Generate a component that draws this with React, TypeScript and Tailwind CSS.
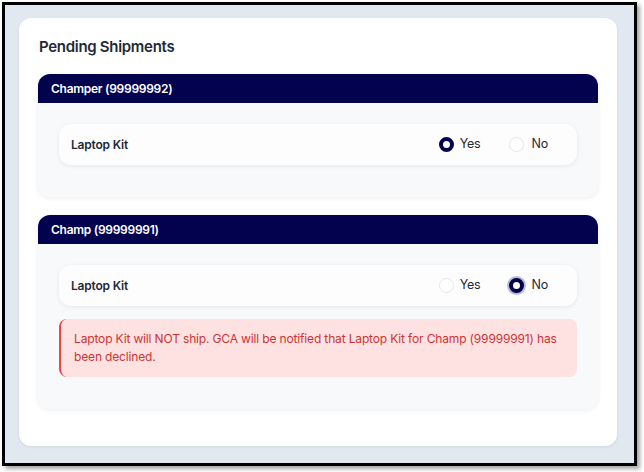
import React from 'react'

type Choice = 'yes' | 'no'

function Radio({ checked, focused }: { checked: boolean; focused?: boolean }) {
    if (checked) {
        return (
            <span
                className={`block w-[15px] h-[15px] rounded-full border-[4px] border-[#02024f] bg-white ${focused ? 'ring-[2px] ring-[#b9b9d6]' : ''}`}
            />
        )
    }
    return <span className="block w-[15px] h-[15px] rounded-full border border-[#e3e5ea] bg-white" />
}

function ItemRow({ name, value, focused }: { name: string; value: Choice; focused?: boolean }) {
    return (
        <div className="flex items-center h-[41px] pl-3 pr-[29px] bg-[#fdfdfe] rounded-[12px] shadow-[0_1px_4px_rgba(15,23,42,0.08)]">
            <span className="flex-1 text-[12px] font-semibold tracking-[-0.2px] text-[#1f2937]">{name}</span>
            <div className="flex items-center gap-[29px] text-[12.5px] tracking-[-0.2px] text-[#1f2937]">
                <label className="flex items-center gap-[6px]">
                    <Radio checked={value === 'yes'} focused={focused} />
                    Yes
                </label>
                <label className="flex items-center gap-[7px]">
                    <Radio checked={value === 'no'} focused={focused} />
                    No
                </label>
            </div>
        </div>
    )
}

function Recipient({ title, value, declinedText }: { title: string; value: Choice; declinedText?: string }) {
    return (
        <div className="rounded-[12px] bg-[#f8f9fb] shadow-[0_1px_5px_rgba(15,23,42,0.08)]">
            <div className="h-[29px] flex items-center px-[13px] rounded-t-[12px] bg-[#02024f] text-white text-[12px] font-semibold tracking-[-0.28px]">
                {title}
            </div>
            <div className="flex flex-col gap-[13px] px-[21px] pt-[21px] pb-[32px]">
                <ItemRow name="Laptop Kit" value={value} focused={!!declinedText} />
                {declinedText && (
                    <div className="rounded-[8px] border-l-2 border-[#ef4444] bg-[#fee2e2] pl-[13px] pr-4 py-[11px] text-[12px] tracking-[-0.15px] leading-[18px] text-[#cc3434]">
                        {declinedText}
                    </div>
                )}
            </div>
        </div>
    )
}

export default function App() {
    return (
        <div className="w-[644px] h-[472px] bg-white pt-[2px] pl-[2px] font-['Inter',sans-serif]">
            <div className="w-[635px] h-[464px] border-[3px] border-black bg-[#e2e8f0] pt-[13px] pl-[14px] shadow-[3px_3px_4px_rgba(0,0,0,0.35)]">
                <div className="w-[598px] h-[428px] bg-white rounded-[12px] px-[19px] pt-[19px] shadow-[0_1px_3px_rgba(15,23,42,0.08)]">
                    <h2 className="text-[15px] font-semibold tracking-[-0.3px] text-[#1f2937] leading-[20px] pl-px">Pending Shipments</h2>
                    <div className="flex flex-col gap-[18px] mt-[17px]">
                        <Recipient title="Champer (99999992)" value="yes" />
                        <Recipient
                            title="Champ (99999991)"
                            value="no"
                            declinedText="Laptop Kit will NOT ship. GCA will be notified that Laptop Kit for Champ (99999991) has been declined."
                        />
                    </div>
                </div>
            </div>
        </div>
    )
}
